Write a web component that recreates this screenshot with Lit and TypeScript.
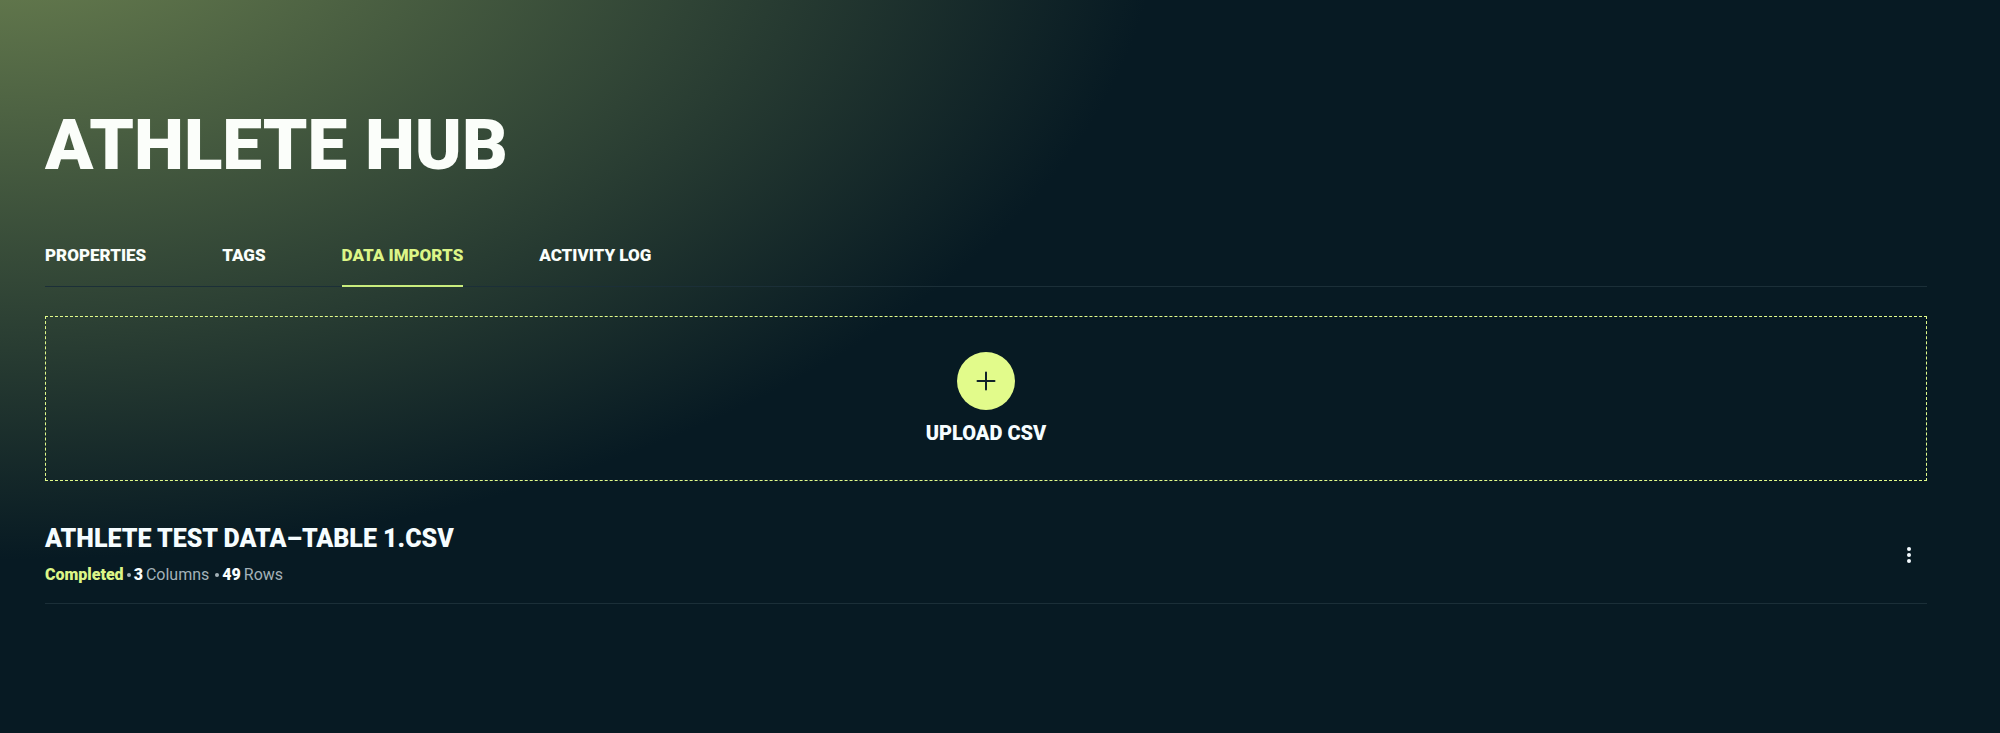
import { LitElement, html, css } from "lit";
import { customElement, property, state } from "lit/decorators.js";
import { classMap } from "lit/directives/class-map.js";

interface ImportFile {
  name: string;
  status: string;
  columns: number;
  rows: number;
}

@customElement("hub-tabs")
class HubTabs extends LitElement {
  @property({ attribute: false }) tabs: string[] = [];
  @property() active = "";

  static styles = css`
    :host {
      display: block;
    }
    .tabs {
      display: flex;
      gap: 76px;
      box-shadow: inset 0 -1px #1b2f38;
    }
    .tab {
      padding: 0 0 20px;
      border: 0;
      border-bottom: 2px solid transparent;
      background: none;
      color: #fafefb;
      font: 900 17px/20px Roboto, sans-serif;
      white-space: nowrap;
      cursor: pointer;
    }
    .active {
      color: #dcf587;
      border-bottom-color: #c9ec7d;
    }
  `;

  private select(tab: string) {
    this.dispatchEvent(new CustomEvent("tab-change", { detail: tab }));
  }

  render() {
    return html`<div class="tabs" role="tablist">
      ${this.tabs.map(
        (tab) => html`<button
          class=${classMap({ tab: true, active: tab === this.active })}
          role="tab"
          aria-selected=${tab === this.active}
          @click=${() => this.select(tab)}
        >${tab}</button>`
      )}
    </div>`;
  }
}

@customElement("upload-zone")
class UploadZone extends LitElement {
  static styles = css`
    :host {
      display: block;
    }
    .zone {
      display: flex;
      flex-direction: column;
      align-items: center;
      gap: 11px;
      box-sizing: border-box;
      width: 100%;
      padding: 35px;
      border: 1px dashed #e2fb8b;
      background: none;
      color: #f6fdff;
      font: 900 20px/24px Roboto, sans-serif;
      cursor: pointer;
    }
    .icon {
      display: flex;
      width: 58px;
      height: 58px;
      align-items: center;
      justify-content: center;
      border-radius: 50%;
      background: #e2fb8b;
    }
  `;

  render() {
    return html`<button class="zone">
      <span class="icon">
        <svg width="20" height="20" viewBox="0 0 20 20" aria-hidden="true">
          <path d="M10 1.5v17M1.5 10h17" stroke="#10222a" stroke-width="2" stroke-linecap="round" />
        </svg>
      </span>
      <span>UPLOAD CSV</span>
    </button>`;
  }
}

@customElement("import-row")
class ImportRow extends LitElement {
  @property({ attribute: false }) file!: ImportFile;

  static styles = css`
    :host {
      display: flex;
      align-items: center;
      justify-content: space-between;
      padding: 43px 0 18px;
      border-bottom: 1px solid #1b2f38;
    }
    .name {
      margin: 0 0 11px;
      color: #f6fdff;
      font: 900 25px/30px Roboto, sans-serif;
    }
    .meta {
      display: flex;
      align-items: center;
      gap: 3px;
      margin: 0;
      color: #a3b1b8;
      font: 400 16px/20px Roboto, sans-serif;
    }
    .status {
      color: #dcf587;
      font-weight: 900;
    }
    .count {
      color: #fafefe;
      font-weight: 900;
    }
    .dot {
      width: 4px;
      height: 4px;
      border-radius: 50%;
      background: #a3b1b8;
    }
    .gap {
      margin-left: 3px;
    }
    .menu {
      display: flex;
      padding: 8px;
      margin-right: 8px;
      border: 0;
      background: none;
      cursor: pointer;
    }
  `;

  render() {
    const { name, status, columns, rows } = this.file;
    return html`
      <div>
        <h2 class="name">${name}</h2>
        <p class="meta">
          <span class="status">${status}</span>
          <span class="dot"></span>
          <span class="count">${columns}</span>
          <span>Columns</span>
          <span class="dot gap"></span>
          <span class="count">${rows}</span>
          <span>Rows</span>
        </p>
      </div>
      <button class="menu" aria-label="Import options">
        <svg width="4" height="16" viewBox="0 0 4 16" fill="#f4fbff" aria-hidden="true">
          <circle cx="2" cy="2" r="2" />
          <circle cx="2" cy="8" r="2" />
          <circle cx="2" cy="14" r="2" />
        </svg>
      </button>
    `;
  }
}

@customElement("app-root")
class AppRoot extends LitElement {
  @state() private active = "DATA IMPORTS";

  private tabs = ["PROPERTIES", "TAGS", "DATA IMPORTS", "ACTIVITY LOG"];
  private files: ImportFile[] = [
    { name: "ATHLETE TEST DATA–TABLE 1.CSV", status: "Completed", columns: 3, rows: 49 },
  ];

  static styles = css`
    :host {
      display: block;
      box-sizing: border-box;
      min-height: 100vh;
      padding: 103px 73px 48px 45px;
      background: radial-gradient(ellipse 58% 90% at 0 -100px, #6f8552, #071a23);
      font-family: Roboto, sans-serif;
    }
    .title {
      margin: 0 0 58px;
      color: #fbfefa;
      font: 900 71px/84px Roboto, sans-serif;
    }
    .upload {
      margin-top: 29px;
    }
  `;

  render() {
    return html`
      <main>
        <h1 class="title">ATHLETE HUB</h1>
        <hub-tabs
          .tabs=${this.tabs}
          .active=${this.active}
          @tab-change=${(e: CustomEvent<string>) => (this.active = e.detail)}
        ></hub-tabs>
        <upload-zone class="upload"></upload-zone>
        ${this.files.map((file) => html`<import-row .file=${file}></import-row>`)}
      </main>
    `;
  }
}
